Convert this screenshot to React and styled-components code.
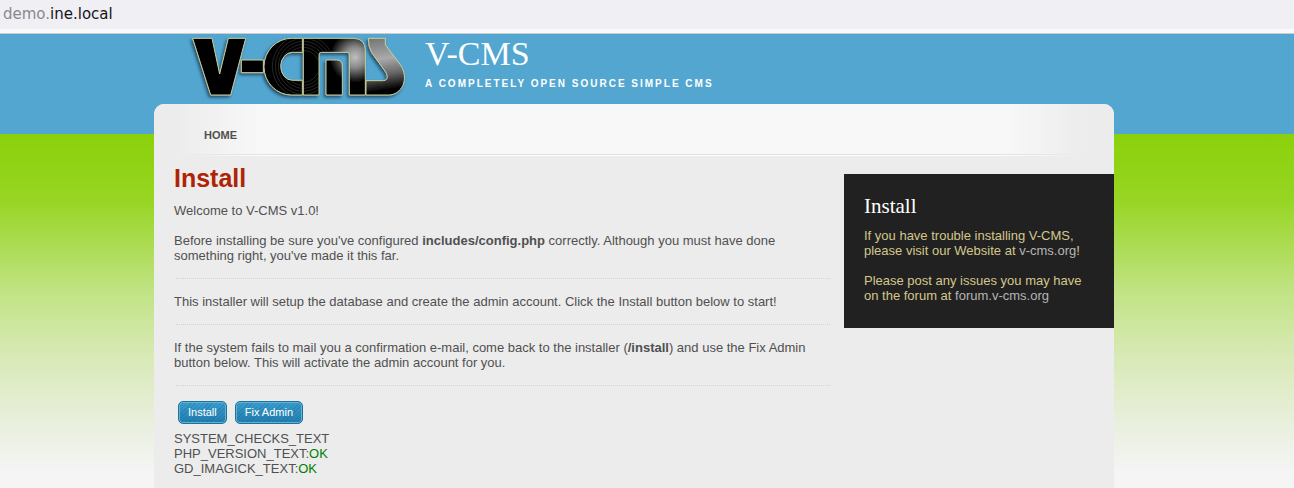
import React from "react";
import styled, { createGlobalStyle } from "styled-components";

const sans = '"Liberation Sans", Arial, sans-serif';
const serif = '"Liberation Serif", "Times New Roman", serif';

const GlobalStyle = createGlobalStyle`
  * { box-sizing: border-box; }
  body {
    margin: 0;
    background: #f5f5f5;
    color: #505050;
    font: 13px/15px ${sans};
  }
  a { color: inherit; text-decoration: none; }
  h1, h2, p { margin: 0; }
`;

const AddressBar = styled.div`
  height: 34px;
  padding: 4px 3px;
  background: linear-gradient(#f0eff4 29px, #f9f9fb 29px);
  border-bottom: 1px solid #cccccf;
  color: #8a898f;
  font: 15px/20px "DejaVu Sans", sans-serif;
`;

const Domain = styled.span`
  color: #15141a;
`;

const Site = styled.div`
  min-height: calc(100vh - 34px);
  padding-right: 26px;
  background:
    linear-gradient(#8bd10a, #97d523 66px, #c0e382 156px, #d8e9b5 220px, #eaf0e0 295px, #f5f5f5 340px) 0 100px no-repeat,
    #53a6d0;
`;

const Wrapper = styled.div`
  max-width: 960px;
  min-height: calc(100vh - 34px);
  margin: 0 auto;
  display: flex;
  flex-direction: column;
`;

const Banner = styled.header`
  height: 70px;
  padding-left: 34px;
  display: flex;
  gap: 13px;
`;

const Logo = styled.svg`
  width: 224px;
  height: 68px;
  flex: none;
`;

const SiteTitle = styled.h1`
  color: #fff;
  font: 34px/40px ${serif};
`;

const Slogan = styled.p`
  margin-top: 4px;
  color: #fff;
  font-size: 10px;
  line-height: 12px;
  font-weight: bold;
  letter-spacing: 2px;
  text-transform: uppercase;
`;

const Page = styled.div`
  flex: 1;
  background: #ececec;
  border-radius: 10px 10px 0 0;
`;

const Nav = styled.nav`
  height: 53px;
  padding: 23px 50px 0;
  background:
    linear-gradient(90deg, #ececec 30px, #e0e0e0 120px, #e0e0e0 calc(100% - 120px), #ececec calc(100% - 30px)) 0 50px / 100% 1px no-repeat,
    linear-gradient(90deg, #ececec 30px, #fff 120px, #fff calc(100% - 120px), #ececec calc(100% - 30px)) 0 51px / 100% 1px no-repeat,
    linear-gradient(90deg, #ececec 20px, #f8f8f8 110px, #f8f8f8 calc(100% - 110px), #ececec calc(100% - 30px)) 0 0 / 100% 50px no-repeat;
  border-radius: 10px 10px 0 0;
`;

const NavLink = styled.a`
  font-size: 11px;
  font-weight: bold;
  text-transform: uppercase;
`;

const Columns = styled.div`
  display: flex;
  align-items: flex-start;
  gap: 14px;
`;

const Main = styled.main`
  flex: 1;
  padding: 6px 0 12px 20px;
`;

const PageHeading = styled.h2`
  margin-bottom: 10px;
  color: #ae2505;
  font-size: 25px;
  line-height: 30px;
`;

const Paragraph = styled.p`
  margin-bottom: 15px;
`;

const Divider = styled.hr`
  margin: 0 0 15px 2px;
  border: 0;
  border-top: 1px dotted #d4d4d4;
`;

const Actions = styled.div`
  display: flex;
  gap: 8px;
  padding: 0 4px;
  margin-bottom: 7px;
`;

const Button = styled.button`
  height: 23px;
  padding: 0 9px;
  border: 1px solid #20719a;
  border-radius: 5px;
  box-shadow: inset 0 0 0 1px #66b0d6;
  background:
    repeating-linear-gradient(135deg, #0a4a7030 0 1px, transparent 1px 3px),
    linear-gradient(#3a9fd0, #217eae);
  color: #fff;
  font: 11px/13px ${sans};
`;

const Ok = styled.span`
  color: #008000;
`;

const Sidebar = styled.aside`
  width: 270px;
  flex: none;
  margin-top: 17px;
  padding: 20px 20px 25px;
  background: #212121;
  color: #d4c78c;
`;

const SideHeading = styled.h2`
  margin-bottom: 10px;
  color: #fff;
  font: 21px/24px ${serif};
`;

const SideLink = styled.a`
  color: #b5b5b5;
`;

const rings = [48, 57, 66, 75, 84, 93];

function VcmsLogo() {
  return (
    <Logo viewBox="24 18 672 204" role="img" aria-label="V-CMS logo">
      <defs>
        <radialGradient id="shine" gradientUnits="userSpaceOnUse" cx="525" cy="88" r="76">
          <stop offset="0" stopColor="#c0c0c0" />
          <stop offset="0.4" stopColor="#8a8a8a" />
          <stop offset="1" stopColor="#000" />
        </radialGradient>
        <linearGradient id="silver" gradientUnits="userSpaceOnUse" x1="600" y1="30" x2="625" y2="185">
          <stop offset="0" stopColor="#777" />
          <stop offset="0.4" stopColor="#aaa" />
          <stop offset="0.7" stopColor="#666" />
          <stop offset="1" stopColor="#000" />
        </linearGradient>
        <clipPath id="disc">
          <path d="M365 34H335A83 82 0 0 0 335 198H365V159H337A37 44 0 0 1 337 71H365Z" />
          <path d="M372 34H480V71H424Q415 71 415 80V198H372Z" />
        </clipPath>
        <filter id="shadow" x="-5%" y="-10%" width="110%" height="125%">
          <feDropShadow dx="-5" dy="6" stdDeviation="4" floodColor="#0b2c3c" floodOpacity="0.7" />
        </filter>
      </defs>
      <g filter="url(#shadow)" stroke="#cbcf9c" strokeWidth="3" strokeLinejoin="round">
        <path d="M38 31H96L119 138L145 31H197L152 201H92Z" />
        <path d="M184 96H250V134H184Z" />
        <path d="M367 31H335A83 85 0 0 0 335 201H367V157H337A35 42 0 0 1 337 73H367Z" />
        <path fill="url(#shine)" d="M370 31H522Q556 33 556 68V201H508V80Q508 73 501 73H424Q417 73 417 80V201H370Z" />
        <path fill="url(#shine)" d="M438 96H470Q487 96 487 112V201H438Z" />
        <path fill="url(#silver)" d="M565 31H616V50L661 110C690 154 664 201 626 201H558V158H610C625 157 624 144 617 132L575 74Q565 58 565 31Z" />
      </g>
      <g clipPath="url(#disc)" fill="none" stroke="#383838" strokeWidth="2">
        {rings.map((r) => (
          <circle key={r} cx="370" cy="115" r={r} />
        ))}
      </g>
    </Logo>
  );
}

export default function App() {
  return (
    <>
      <GlobalStyle />
      <AddressBar>
        demo.<Domain>ine.local</Domain>
      </AddressBar>
      <Site>
        <Wrapper>
          <Banner>
            <VcmsLogo />
            <div>
              <SiteTitle>V-CMS</SiteTitle>
              <Slogan>A completely open source simple CMS</Slogan>
            </div>
          </Banner>
          <Page>
            <Nav>
              <NavLink href="#">Home</NavLink>
            </Nav>
            <Columns>
              <Main>
                <PageHeading>Install</PageHeading>
                <Paragraph>Welcome to V-CMS v1.0!</Paragraph>
                <Paragraph>
                  Before installing be sure you've configured <b>includes/config.php</b> correctly.
                  Although you must have done something right, you've made it this far.
                </Paragraph>
                <Divider />
                <Paragraph>
                  This installer will setup the database and create the admin account. Click the
                  Install button below to start!
                </Paragraph>
                <Divider />
                <Paragraph>
                  If the system fails to mail you a confirmation e-mail, come back to the installer
                  (<b>/install</b>) and use the Fix Admin button below. This will activate the admin
                  account for you.
                </Paragraph>
                <Divider />
                <Actions>
                  <Button type="button">Install</Button>
                  <Button type="button">Fix Admin</Button>
                </Actions>
                <div>SYSTEM_CHECKS_TEXT</div>
                <div>PHP_VERSION_TEXT:<Ok>OK</Ok></div>
                <div>GD_IMAGICK_TEXT:<Ok>OK</Ok></div>
              </Main>
              <Sidebar>
                <SideHeading>Install</SideHeading>
                <Paragraph>
                  If you have trouble installing V-CMS, please visit our Website at{" "}
                  <SideLink href="#">v-cms.org</SideLink>!
                </Paragraph>
                <p>
                  Please post any issues you may have on the forum at{" "}
                  <SideLink href="#">forum.v-cms.org</SideLink>
                </p>
              </Sidebar>
            </Columns>
          </Page>
        </Wrapper>
      </Site>
    </>
  );
}
